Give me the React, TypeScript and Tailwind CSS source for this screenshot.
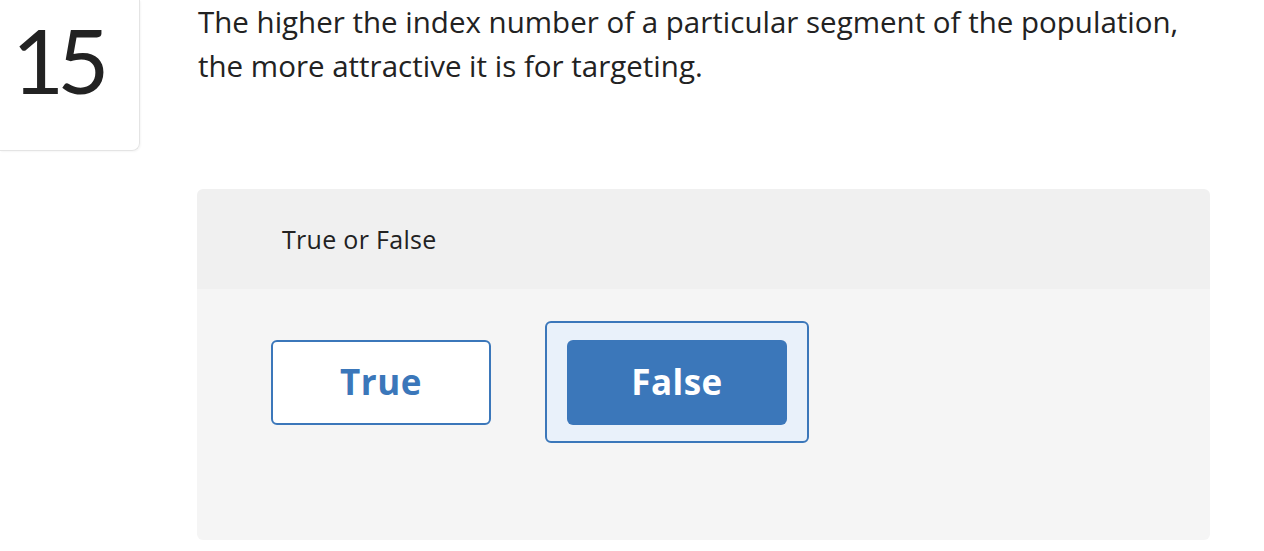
export default function App() {
  const font = { fontFamily: '"Open Sans", Lato, sans-serif' }
  return (
    <div className="min-h-[551px] bg-white text-[#222]" style={font}>
      <div className="flex items-start">
        <div className="w-[140px] h-[151px] shrink-0 border-r border-b border-[#e4e4e4] rounded-br-lg shadow-[1px_1px_2px_rgba(0,0,0,0.04)] pl-[12px] pt-[10px]">
          <span className="block text-[90px] leading-[1.1] tracking-[-7px]" style={{ fontFamily: 'Lato, sans-serif' }}>15</span>
        </div>
        <p className="ml-[58px] mt-[0px] text-[29.5px] leading-[44px] w-[1010px] [font-variant-ligatures:none]">
          The higher the index number of a particular segment of the population, the more attractive it is for targeting.
        </p>
      </div>

      <div className="ml-[197px] mt-[38px] w-[1013px] rounded-md overflow-hidden">
        <div className="h-[100px] bg-[#f0f0f0] flex items-center pl-[85px]">
          <span className="text-[25px] tracking-[0.3px] pt-[2px]">True or False</span>
        </div>
        <div className="h-[251px] bg-[#f5f5f5] pl-[52px] pt-[32px] flex items-start gap-[32px]">
          <div className="p-[17px_20px_16px_20px] border-2 border-transparent rounded-md">
            <button className="w-[220px] h-[85px] bg-white border-2 border-[#3b77ba] rounded-md text-[#3b77ba] text-[35px] tracking-[0.5px] font-bold">
              True
            </button>
          </div>
          <div className="p-[17px_20px_16px_20px] border-2 border-[#3b77ba] bg-[#e9f1fa] rounded-md">
            <button className="w-[220px] h-[85px] bg-[#3b77ba] rounded-md text-white text-[35px] tracking-[0.5px] font-bold">
              False
            </button>
          </div>
        </div>
      </div>
    </div>
  )
}
